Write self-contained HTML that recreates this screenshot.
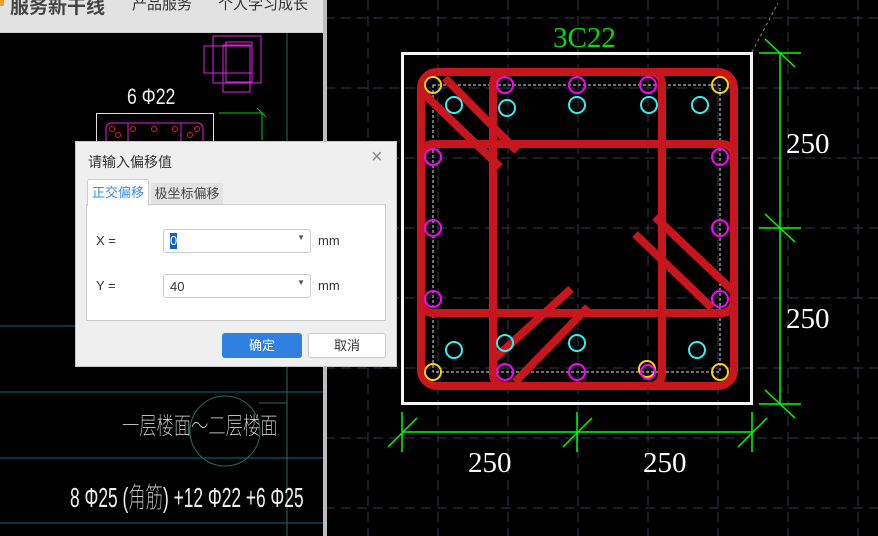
<!DOCTYPE html>
<html><head><meta charset="utf-8"><style>
body{margin:0;width:878px;height:536px;overflow:hidden;background:#000;position:relative;font-family:"Liberation Sans","Noto Sans CJK SC",sans-serif}
.abs{position:absolute}
</style></head><body>
<svg class="abs" style="left:0;top:0" width="878" height="536">
<g stroke="#343b48" stroke-width="1" stroke-dasharray="10,6">
<line x1="368" y1="0" x2="368" y2="536"/><line x1="438" y1="0" x2="438" y2="536"/><line x1="508" y1="0" x2="508" y2="536"/><line x1="578" y1="0" x2="578" y2="536"/><line x1="648" y1="0" x2="648" y2="536"/><line x1="718" y1="0" x2="718" y2="536"/><line x1="788" y1="0" x2="788" y2="536"/><line x1="858" y1="0" x2="858" y2="536"/>
<line x1="325" y1="18" x2="878" y2="18"/><line x1="325" y1="88" x2="878" y2="88"/><line x1="325" y1="158" x2="878" y2="158"/><line x1="325" y1="228" x2="878" y2="228"/><line x1="325" y1="298" x2="878" y2="298"/><line x1="325" y1="368" x2="878" y2="368"/><line x1="325" y1="438" x2="878" y2="438"/><line x1="325" y1="508" x2="878" y2="508"/>
</g>
<line x1="752" y1="52" x2="778" y2="3" stroke="#888" stroke-dasharray="3,3"/>
<rect x="402.5" y="53.5" width="349" height="350" fill="none" stroke="#f4f4f4" stroke-width="3"/>
<rect x="433" y="85" width="287" height="287" fill="none" stroke="#ddd" stroke-dasharray="3,2"/>
<g fill="none" stroke="#c8161e" stroke-width="8" stroke-linecap="butt">
<rect x="421" y="72" width="313" height="314" rx="16"/>
<rect x="493" y="72" width="169" height="314" rx="12"/>
<rect x="421" y="144" width="313" height="169" rx="12"/>
<line x1="423" y1="93" x2="500" y2="167"/><line x1="445" y1="78" x2="517" y2="151"/>
<line x1="571" y1="289" x2="495" y2="358"/><line x1="588" y1="307" x2="515" y2="382"/>
<line x1="635" y1="234" x2="712" y2="308"/><line x1="655" y1="217" x2="732" y2="290"/>
</g>
<g fill="none" stroke-width="2">
<g stroke="#ffd400"><circle cx="433" cy="85" r="8"/><circle cx="720" cy="85" r="8"/><circle cx="433" cy="372" r="8"/><circle cx="720" cy="372" r="8"/><circle cx="647" cy="369" r="8"/></g>
<g stroke="#ff00ff"><circle cx="505" cy="85" r="8"/><circle cx="577" cy="85" r="8"/><circle cx="648" cy="85" r="8"/><circle cx="433" cy="157" r="8"/><circle cx="720" cy="157" r="8"/><circle cx="433" cy="228" r="8"/><circle cx="720" cy="228" r="8"/><circle cx="433" cy="299" r="8"/><circle cx="720" cy="299" r="8"/><circle cx="505" cy="372" r="8"/><circle cx="577" cy="372" r="8"/><circle cx="648" cy="372" r="7"/></g>
<g stroke="#33f0f0"><circle cx="454" cy="105" r="8"/><circle cx="507" cy="108" r="8"/><circle cx="577" cy="105" r="8"/><circle cx="649" cy="105" r="8"/><circle cx="700" cy="105" r="8"/><circle cx="454" cy="350" r="8"/><circle cx="505" cy="343" r="8"/><circle cx="577" cy="343" r="8"/><circle cx="697" cy="350" r="8"/></g>
</g>
<g stroke="#00ff00" stroke-width="1.5">
<line x1="780" y1="53" x2="780" y2="404"/>
<line x1="759" y1="53" x2="801" y2="53"/><line x1="759" y1="228" x2="801" y2="228"/><line x1="759" y1="404" x2="801" y2="404"/>
<line x1="765" y1="39" x2="795" y2="67"/><line x1="765" y1="214" x2="795" y2="242"/><line x1="765" y1="390" x2="795" y2="418"/>
<line x1="402" y1="432" x2="752" y2="432"/>
<line x1="402" y1="412" x2="402" y2="452"/><line x1="577" y1="412" x2="577" y2="452"/><line x1="752" y1="412" x2="752" y2="452"/>
<line x1="388" y1="447" x2="417" y2="418"/><line x1="563" y1="447" x2="592" y2="418"/><line x1="738" y1="447" x2="767" y2="418"/>
</g>
<g font-family="Liberation Serif,serif" font-size="29" fill="#fff">
<text x="786" y="153">250</text><text x="786" y="328">250</text>
<text x="468" y="472">250</text><text x="643" y="472">250</text>
</g>
<text x="553" y="47" font-family="Liberation Serif,serif" font-size="29" fill="#00e000">3C22</text>
</svg>

<div class="abs" style="left:0;top:0;width:323px;height:536px;background:#000;overflow:hidden">
<svg class="abs" style="left:0;top:0" width="323" height="536">
<g stroke="#0a6a80" stroke-width="1"><line x1="0" y1="326" x2="323" y2="326"/><line x1="0" y1="392" x2="323" y2="392"/><line x1="0" y1="458" x2="323" y2="458"/><line x1="0" y1="523" x2="323" y2="523"/></g>
<line x1="287" y1="32" x2="287" y2="536" stroke="#2a6a55"/>
<line x1="259" y1="403" x2="287" y2="403" stroke="#2a6a55"/>
<circle cx="225" cy="431" r="35" fill="none" stroke="#2a6a55"/>
<g fill="none" stroke="#e020e0"><rect x="213" y="36" width="48" height="47"/><rect x="204" y="46" width="48" height="27"/><rect x="223" y="45" width="27" height="47"/><rect x="226" y="42" width="26" height="40"/></g>
<rect x="96.5" y="113.5" width="117" height="40" fill="none" stroke="#ddd"/>
<rect x="106" y="123" width="97" height="30" rx="5" fill="none" stroke="#e020e0"/>
<line x1="128" y1="123" x2="128" y2="153" stroke="#e020e0"/><line x1="181" y1="123" x2="181" y2="153" stroke="#e020e0"/>
<g fill="none" stroke="#e02020"><circle cx="112" cy="129" r="2.5"/><circle cx="118" cy="135" r="2.5"/><circle cx="133" cy="129" r="2.5"/><circle cx="154" cy="129" r="2.5"/><circle cx="175" cy="129" r="2.5"/><circle cx="197" cy="129" r="2.5"/><circle cx="190" cy="135" r="2.5"/></g>
<polyline points="219,113 262,113 262,140" fill="none" stroke="#00d000"/>
<line x1="257" y1="108" x2="266" y2="117" stroke="#00d000"/>
</svg>
<div class="abs" style="left:127px;top:84px;color:#eee;font-size:22px;font-weight:100;transform:scaleX(.8);transform-origin:left">6 Φ22</div>
<div class="abs" style="left:122px;top:406px;color:#eee;font-size:24px;font-weight:100;transform:scaleX(.72);transform-origin:left;white-space:nowrap">一层楼面～二层楼面</div>
<div class="abs" style="left:70px;top:476px;color:#eee;font-size:28px;font-weight:100;transform:scaleX(.62);transform-origin:left;white-space:nowrap">8 Φ25 (角筋) +12 Φ22 +6 Φ25</div>
<div class="abs" style="left:0;top:0;width:323px;height:32px;background:#e2e2e2;border-bottom:1px solid #ccc;overflow:hidden">
<div class="abs" style="left:0;top:0;width:4px;height:6px;background:#f0a020"></div>
<div class="abs" style="left:10px;top:-8px;font-size:19px;font-weight:bold;color:#444">服务新干线</div>
<div class="abs" style="left:132px;top:-7px;font-size:15px;color:#333">产品服务</div>
<div class="abs" style="left:218px;top:-7px;font-size:15px;color:#333">个人学习成长</div>
</div>
</div>
<div class="abs" style="left:323px;top:0;width:4px;height:536px;background:#bdbdbd"></div>

<div class="abs" style="left:75px;top:141px;width:322px;height:226px;background:#efefef;border:1px solid #c8c8c8;box-sizing:border-box">
<div class="abs" style="left:12px;top:10px;font-size:14px;color:#333">请输入偏移值</div>
<div class="abs" style="left:295px;top:4px;font-size:20px;color:#888">×</div>
<div class="abs" style="left:11px;top:37px;width:60px;height:26px;background:#fff;border:1px solid #ccc;border-bottom:none;border-radius:3px 3px 0 0;font-size:13px;color:#3a8ee6;text-align:center;line-height:26px;z-index:2">正交偏移</div>
<div class="abs" style="left:75px;top:41px;width:72px;height:22px;background:#e2e2e2;font-size:13px;color:#444;text-align:center;line-height:22px">极坐标偏移</div>
<div class="abs" style="left:10px;top:62px;width:300px;height:117px;background:#fff;border:1px solid #ccc;box-sizing:border-box">
<div class="abs" style="left:9px;top:28px;font-size:13px;color:#333">X =</div>
<div class="abs" style="left:76px;top:24px;width:148px;height:24px;border:1px solid #ccc;border-radius:3px;box-sizing:border-box"><span class="abs" style="left:6px;top:3px;font-size:13px;color:#fff;background:#0a62d0;line-height:16px">0</span><span class="abs" style="right:5px;top:3px;font-size:8px;color:#555">▼</span></div>
<div class="abs" style="left:231px;top:28px;font-size:13px;color:#333">mm</div>
<div class="abs" style="left:9px;top:73px;font-size:13px;color:#333">Y =</div>
<div class="abs" style="left:76px;top:69px;width:148px;height:24px;border:1px solid #ccc;border-radius:3px;box-sizing:border-box"><span class="abs" style="left:6px;top:4px;font-size:13px;color:#333">40</span><span class="abs" style="right:5px;top:3px;font-size:8px;color:#555">▼</span></div>
<div class="abs" style="left:231px;top:73px;font-size:13px;color:#333">mm</div>
</div>
<div class="abs" style="left:146px;top:191px;width:80px;height:25px;background:#2f80e0;border-radius:3px;color:#fff;font-size:13px;text-align:center;line-height:25px">确定</div>
<div class="abs" style="left:232px;top:191px;width:78px;height:25px;background:#fff;border:1px solid #ccc;box-sizing:border-box;border-radius:3px;color:#333;font-size:13px;text-align:center;line-height:23px">取消</div>
</div>
</body></html>
